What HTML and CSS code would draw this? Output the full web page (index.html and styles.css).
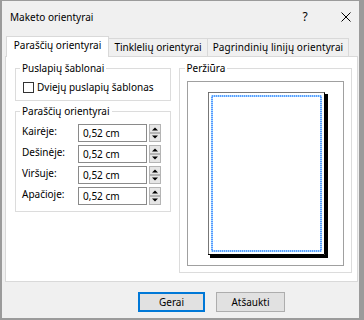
FILE: index.html
```html
<!DOCTYPE html>
<html lang="lt">
<head>
<meta charset="utf-8">
<link rel="stylesheet" href="styles.css">
</head>
<body>
<div class="window">
  <div class="titlebar">
    <span class="title">Maketo orientyrai</span>
    <span class="help">?</span>
    <span class="close"><svg width="10" height="10" viewBox="0 0 10 10"><path d="M0.5 0.5L9.5 9.5M9.5 0.5L0.5 9.5" stroke="#000" stroke-width="1" fill="none"/></svg></span>
  </div>
  <div class="content">
    <div class="tabs">
      <div class="tab active t1">Paraščių orientyrai</div>
      <div class="tab t2">Tinklelių orientyrai</div>
      <div class="tab t3">Pagrindinių linijų orientyrai</div>
    </div>
    <div class="pane">
      <div class="left">
        <fieldset class="group g1">
          <legend>Puslapių šablonai</legend>
          <label class="check"><span class="box"></span>Dviejų puslapių šablonas</label>
        </fieldset>
        <fieldset class="group g2">
          <legend>Paraščių orientyrai</legend>
          <div class="row"><span class="lbl">Kairėje:</span><span class="input">0,52 cm</span><span class="spin"><svg width="12" height="18" viewBox="0 0 12 18"><rect x="0.5" y="0.5" width="11" height="8" fill="#e6e6e6" stroke="#b4b4b4"/><rect x="0.5" y="9.5" width="11" height="8" fill="#e6e6e6" stroke="#b4b4b4"/><path d="M3 6.5h6L6 3.5z" fill="#000"/><path d="M3 11.5h6L6 14.5z" fill="#000"/></svg></span></div>
          <div class="row"><span class="lbl">Dešinėje:</span><span class="input">0,52 cm</span><span class="spin"><svg width="12" height="18" viewBox="0 0 12 18"><rect x="0.5" y="0.5" width="11" height="8" fill="#e6e6e6" stroke="#b4b4b4"/><rect x="0.5" y="9.5" width="11" height="8" fill="#e6e6e6" stroke="#b4b4b4"/><path d="M3 6.5h6L6 3.5z" fill="#000"/><path d="M3 11.5h6L6 14.5z" fill="#000"/></svg></span></div>
          <div class="row"><span class="lbl">Viršuje:</span><span class="input">0,52 cm</span><span class="spin"><svg width="12" height="18" viewBox="0 0 12 18"><rect x="0.5" y="0.5" width="11" height="8" fill="#e6e6e6" stroke="#b4b4b4"/><rect x="0.5" y="9.5" width="11" height="8" fill="#e6e6e6" stroke="#b4b4b4"/><path d="M3 6.5h6L6 3.5z" fill="#000"/><path d="M3 11.5h6L6 14.5z" fill="#000"/></svg></span></div>
          <div class="row"><span class="lbl">Apačioje:</span><span class="input">0,52 cm</span><span class="spin"><svg width="12" height="18" viewBox="0 0 12 18"><rect x="0.5" y="0.5" width="11" height="8" fill="#e6e6e6" stroke="#b4b4b4"/><rect x="0.5" y="9.5" width="11" height="8" fill="#e6e6e6" stroke="#b4b4b4"/><path d="M3 6.5h6L6 3.5z" fill="#000"/><path d="M3 11.5h6L6 14.5z" fill="#000"/></svg></span></div>
        </fieldset>
      </div>
      <fieldset class="group preview">
        <legend>Peržiūra</legend>
        <div class="pbox">
          <svg class="page" width="120" height="166" viewBox="0 0 120 166">
            <rect x="2" y="2" width="118" height="164" fill="#000"/>
            <rect x="0" y="0" width="117" height="163" fill="#fff"/>
            <path d="M0.5 163V0.5H116.5V162.5H0.5" fill="none" stroke="#000"/>
            <path d="M0.5 162V0.5H116" fill="none" stroke="#777"/>
            <rect x="4" y="4" width="109" height="155" fill="none" stroke="#8fd8ff" stroke-width="1.6"/>
            <rect x="4" y="4" width="109" height="155" fill="none" stroke="#4a80ff" stroke-width="1.6" stroke-dasharray="1 1"/>
          </svg>
        </div>
      </fieldset>
    </div>
    <div class="buttons">
      <button class="btn default">Gerai</button>
      <button class="btn cancel">Atšaukti</button>
    </div>
  </div>
</div>
</body>
</html>
```
FILE: styles.css
```css
* { box-sizing: border-box; }
html, body { margin: 0; padding: 0; }
body {
  font-family: "Noto Sans", "DejaVu Sans", sans-serif;
  font-size: 10px;
  color: #000;
  background: #999;
}
.window {
  width: 364px;
  height: 320px;
  border-style: solid;
  border-color: #9b9b9b;
  border-width: 1px 5px 2px 2px;
  background: #f0f0f0;
  display: flex;
  flex-direction: column;
}
.titlebar {
  height: 29px;
  display: flex;
  align-items: center;
  padding-left: 8px;
  padding-top: 2px;
}
.title { font-size: 10px; }
.help {
  margin-left: auto;
  width: 10px;
  text-align: center;
  font-size: 12px;
}
.close {
  margin-left: 31px;
  margin-right: 8px;
  width: 10px;
  height: 10px;
  display: flex;
}
.content {
  padding: 0 1px 0 3px;
  display: flex;
  flex-direction: column;
}
.tabs {
  margin-top: 6px;
  height: 21px;
  margin-bottom: -1px;
  display: flex;
  align-items: flex-end;
  position: relative;
  z-index: 1;
}
.tab {
  border: 1px solid #d9d9d9;
  border-bottom: none;
  text-align: center;
  white-space: nowrap;
}
.tab.active {
  height: 21px;
  background: #fff;
  line-height: 17px;
  position: relative;
  z-index: 2;
}
.tab:not(.active) {
  height: 18px;
  margin-bottom: 1px;
  background: #f0f0f0;
  line-height: 16px;
}
.t1 { margin-left: 1px; width: 103px; }
.t2 { margin-left: -1px; width: 100px; }
.t3 { margin-left: -1px; width: 142px; letter-spacing: 0.1px; }
.pane {
  height: 226px;
  border: 1px solid #d9d9d9;
  background: #fff;
  display: flex;
  align-items: stretch;
  padding: 3px 5px 8px 9px;
}
.left {
  width: 156px;
  display: flex;
  flex-direction: column;
  align-self: flex-start;
}
.group {
  margin: 0;
  border: 1px solid #dcdcdc;
  min-width: 0;
}
.group legend {
  padding: 0 2px;
  margin-left: -2px;
  line-height: 16px;
}
.g1 { padding: 3px 6px 5px 6px; }
.check {
  display: flex;
  align-items: center;
  height: 16px;
}
.box {
  width: 11px;
  height: 11px;
  border: 1px solid #333;
  background: #fff;
  margin: 0 3px 0 1px;
}
.g2 {
  margin-top: 2px;
  padding: 5px 6px 6px 6px;
  display: flex;
  flex-direction: column;
  gap: 3px;
}
.row {
  display: flex;
  align-items: flex-start;
  height: 18px;
}
.lbl {
  width: 56px;
  line-height: 14px;
}
.input {
  width: 69px;
  height: 18px;
  border: 1px solid #8a8a8a;
  background: #fff;
  padding: 1px 0 0 4px;
  line-height: 15px;
}
.spin {
  margin-left: 2px;
  width: 12px;
  height: 18px;
  display: flex;
}
.preview {
  margin-left: 8px;
  width: 174px;
  padding: 5px 7px 6px 7px;
}
.pbox {
  height: 185px;
  border: 1px solid #a0a0a0;
  background: #fff;
  padding: 10px 0 0 20px;
}
.page {
  display: block;
}
.buttons {
  display: flex;
  margin-top: 10px;
  padding-left: 133px;
}
.btn {
  font-family: inherit;
  font-size: 10px;
  color: #000;
  height: 20px;
  padding: 0;
  background: #e1e1e1;
  border: 1px solid #adadad;
  line-height: 16px;
}
.btn.default {
  width: 67px;
  border: 2px solid #0078d7;
}
.btn.cancel {
  width: 69px;
  margin-left: 11px;
}
```
